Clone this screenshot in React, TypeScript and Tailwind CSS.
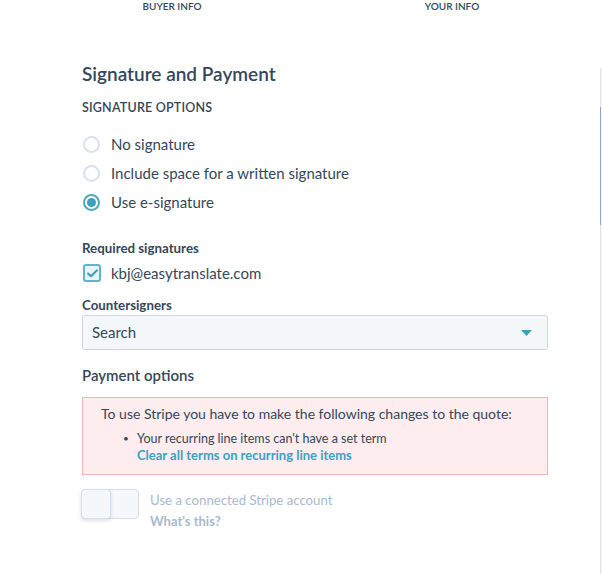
import React from "react";

function Radio({ checked, label }: { checked?: boolean; label: string }) {
  return (
    <div className="flex h-[29px] items-center">
      <div
        className={
          checked
            ? "ml-[1px] flex h-[17px] w-[17px] items-center justify-center rounded-full border-2 border-[#4aa8c4] bg-white"
            : "ml-[1px] h-[17px] w-[17px] rounded-full border-2 border-[#d9e1ea] bg-white"
        }
      >
        {checked && <div className="h-[9px] w-[9px] rounded-full bg-[#3f9fbf]" />}
      </div>
      <span className="ml-[11px] text-[15px] text-[#33475b]">{label}</span>
    </div>
  );
}

export default function App() {
  return (
    <div
      className="flex h-[574px] w-[602px] overflow-hidden bg-white text-[#33475b]"
      style={{ fontFamily: "Lato, 'Open Sans', sans-serif" }}
    >
      <div className="min-w-0 flex-1">
        <div className="grid h-[12px] grid-cols-[280px_280px] pl-[32px] text-[10px] font-semibold leading-[12px] text-[#33475b]">
          <div className="text-center">BUYER INFO</div>
          <div className="text-center">YOUR INFO</div>
        </div>

        <div className="pl-[82px] pr-[52px]">
          <h2 className="mt-[50px] text-[19px] font-semibold leading-[24px]">Signature and Payment</h2>
          <div className="mt-[13px] text-[12.5px] font-semibold leading-[18px] tracking-[0.2px]">SIGNATURE OPTIONS</div>

          <div className="mt-[13px] flex flex-col">
            <Radio label="No signature" />
            <Radio label="Include space for a written signature" />
            <Radio checked label="Use e-signature" />
          </div>

          <div className="mt-[22px] text-[13.3px] font-bold leading-[18px]">Required signatures</div>
          <div className="mt-[4px] flex h-[24px] items-center">
            <div className="ml-[1px] flex h-[18px] w-[18px] items-center justify-center rounded-[3px] border-2 border-[#5fb4cc] bg-[#eaf4f7]">
              <svg width="11" height="9" viewBox="0 0 11 9">
                <path d="M1.2 4.6 L4 7.3 L9.8 1.4" fill="none" stroke="#3f9fbf" strokeWidth="2.2" strokeLinecap="round" strokeLinejoin="round" />
              </svg>
            </div>
            <span className="ml-[10px] text-[15px]">kbj@easytranslate.com</span>
          </div>

          <div className="mt-[11px] text-[13.3px] font-bold leading-[18px]">Countersigners</div>
          <div className="mt-[1px] flex h-[35px] items-center justify-between rounded-[3px] border border-[#cbd6e2] bg-[#f5f8fa] pl-[9px] pr-[15px]">
            <span className="text-[15px] text-[#33475b]">Search</span>
            <svg width="11" height="6" viewBox="0 0 11 6">
              <path d="M0 0 L11 0 L5.5 6 Z" fill="#3f9fbf" />
            </svg>
          </div>

          <div className="mt-[15px] text-[15px] font-semibold leading-[20px]">Payment options</div>

          <div className="mt-[12px] border border-[#f2b3b6] bg-[#fdedee] pb-[10px] pl-[18px] pt-[7px] leading-[17px] text-[#33475b]">
            <div className="text-[14px]">To use Stripe you have to make the following changes to the quote:</div>
            <div className="mt-[8px] flex pl-[22px] text-[12.5px]">
              <span className="w-[14px] text-[10px]">•</span>
              <div>
                <div>Your recurring line items can't have a set term</div>
                <div className="text-[13px] font-bold text-[#3f9fbf]">Clear all terms on recurring line items</div>
              </div>
            </div>
          </div>

          <div className="mt-[14px] flex">
            <div className="relative -ml-[1px] h-[30px] w-[58px] rounded-[4px] border border-[#d6dfe8] bg-[#f5f8fa]">
              <div className="absolute -left-[1px] -top-[1px] h-[30px] w-[30px] rounded-[4px] border border-[#d6dfe8] bg-[#f5f8fa] shadow-[0_2px_4px_rgba(0,0,0,0.12)]" />
            </div>
            <div className="ml-[11px] flex flex-col text-[13.2px] leading-[20px] text-[#a9b9cc]">
              <div className="mt-[1px]">Use a connected Stripe account</div>
              <div className="mt-[1px] text-[13px] font-bold">What's this?</div>
            </div>
          </div>
        </div>
      </div>

      <div className="mt-[68px] flex w-[2px] shrink-0 flex-col bg-[#f6f6f8]">
        <div className="h-[39px] w-[1px] bg-[#e3e4ea]" />
        <div className="h-[118px] w-[1px] bg-[#8ea3e2]" />
        <div className="w-[1px] flex-1 bg-[#e3e4ea]" />
      </div>
    </div>
  );
}
